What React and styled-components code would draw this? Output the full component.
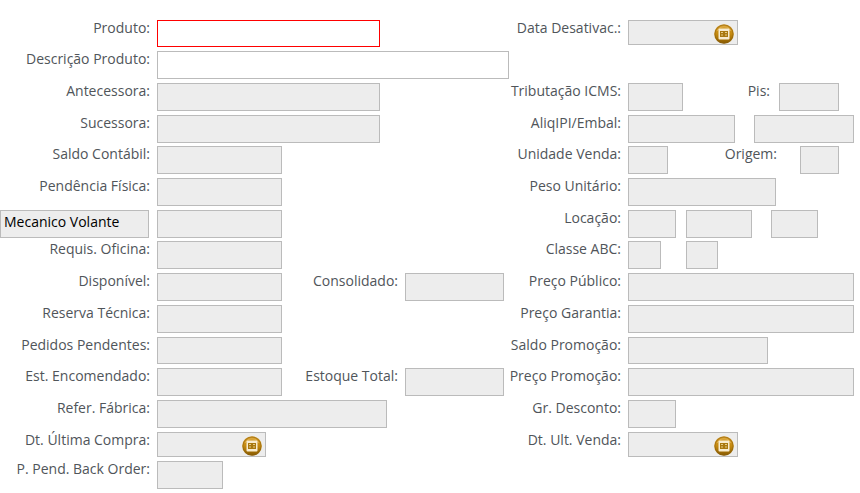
import React from "react";
import styled, { createGlobalStyle } from "styled-components";

const CalendarIcon = () => (
  <svg width="20" height="20" viewBox="0 0 20 20" aria-hidden="true">
    <defs>
      <linearGradient id="gold" x1="0" y1="0" x2="0" y2="1">
        <stop offset="0" stopColor="#d39a2a" />
        <stop offset="0.5" stopColor="#c58a10" />
        <stop offset="1" stopColor="#855800" />
      </linearGradient>
    </defs>
    <circle cx="10" cy="10" r="9.8" fill="url(#gold)" />
    <circle cx="10" cy="10" r="9" fill="none" stroke="#8a5f10" strokeOpacity="0.5" />
    <path d="M3 7a8 8 0 0 1 14 0" fill="none" stroke="#e8bd62" strokeOpacity="0.7" />
    <rect x="4.5" y="4.5" width="11" height="11" rx="1" fill="#f8ecd0" />
    <rect x="6" y="7" width="8" height="6" fill="#a9780f" />
    <path d="M7 8.5h2M11 8.5h2M7 11h2M11 11h2" stroke="#e6cc88" />
  </svg>
);

const Field = ({ label, name, width, white, required, space, short }) => (
  <Input
    id={name}
    name={name}
    aria-label={label}
    $width={width}
    $white={white}
    $required={required}
    $space={space}
    $short={short}
    readOnly={!white}
  />
);

const DateField = ({ name, width }) => (
  <DateBox $width={width}>
    <DateInput id={name} name={name} readOnly />
    <DateButton type="button" aria-label="Abrir calendário">
      <CalendarIcon />
    </DateButton>
  </DateBox>
);

const App = () => {
  return (
    <>
      <GlobalStyle />
      <Form onSubmit={(e) => e.preventDefault()}>
        <Row>
          <Label htmlFor="produto">Produto:</Label>
          <Fields>
            <Field name="produto" width={223} white required short />
          </Fields>
          <Label htmlFor="dataDesativac">Data Desativac.:</Label>
          <Fields>
            <DateField name="dataDesativac" width={110} />
          </Fields>
        </Row>
        <Row>
          <Label htmlFor="descricao">Descrição Produto:</Label>
          <Fields>
            <Field name="descricao" white />
          </Fields>
        </Row>
        <Row>
          <Label htmlFor="antecessora">Antecessora:</Label>
          <Fields>
            <Field name="antecessora" width={223} />
          </Fields>
          <Label htmlFor="icms">Tributação ICMS:</Label>
          <Fields>
            <Field name="icms" width={55} />
            <InnerLabel htmlFor="pis" $width={96} $pad={9}>Pis:</InnerLabel>
            <Field name="pis" width={60} />
          </Fields>
        </Row>
        <Row $tight>
          <Label htmlFor="sucessora">Sucessora:</Label>
          <Fields>
            <Field name="sucessora" width={223} />
          </Fields>
          <Label htmlFor="ipi">AliqIPI/Embal:</Label>
          <Fields>
            <Field name="ipi" width={107} />
            <Field name="embal" label="Embalagem" width={100} space={19} />
          </Fields>
        </Row>
        <Row>
          <Label htmlFor="saldoContabil">Saldo Contábil:</Label>
          <Fields>
            <Field name="saldoContabil" width={125} />
          </Fields>
          <Label htmlFor="unidade">Unidade Venda:</Label>
          <Fields>
            <Field name="unidade" width={40} />
            <InnerLabel htmlFor="origem" $width={132} $pad={23}>Origem:</InnerLabel>
            <Field name="origem" width={39} />
          </Fields>
        </Row>
        <Row>
          <Label htmlFor="pendencia">Pendência Física:</Label>
          <Fields>
            <Field name="pendencia" width={125} />
          </Fields>
          <Label htmlFor="peso">Peso Unitário:</Label>
          <Fields>
            <Field name="peso" width={148} />
          </Fields>
        </Row>
        <Row $tight>
          <NameInput aria-label="Descrição do saldo" defaultValue="Mecanico Volante" readOnly />
          <Fields>
            <Field name="mecanico" label="Mecanico Volante" width={125} />
          </Fields>
          <Label htmlFor="locacao1">Locação:</Label>
          <Fields>
            <Field name="locacao1" width={48} />
            <Field name="locacao2" label="Locação 2" width={66} space={10} />
            <Field name="locacao3" label="Locação 3" width={47} space={19} />
          </Fields>
        </Row>
        <Row>
          <Label htmlFor="requis">Requis. Oficina:</Label>
          <Fields>
            <Field name="requis" width={125} />
          </Fields>
          <Label htmlFor="classe1">Classe ABC:</Label>
          <Fields>
            <Field name="classe1" width={33} />
            <Field name="classe2" label="Classe ABC 2" width={32} space={25} />
          </Fields>
        </Row>
        <Row>
          <Label htmlFor="disponivel">Disponível:</Label>
          <Fields>
            <Field name="disponivel" width={125} />
            <InnerLabel htmlFor="consolidado" $width={123} $pad={7}>Consolidado:</InnerLabel>
            <Field name="consolidado" width={99} />
          </Fields>
          <Label htmlFor="precoPublico">Preço Público:</Label>
          <Fields>
            <Field name="precoPublico" />
          </Fields>
        </Row>
        <Row>
          <Label htmlFor="reserva">Reserva Técnica:</Label>
          <Fields>
            <Field name="reserva" width={125} />
          </Fields>
          <Label htmlFor="precoGarantia">Preço Garantia:</Label>
          <Fields>
            <Field name="precoGarantia" />
          </Fields>
        </Row>
        <Row>
          <Label htmlFor="pedidos">Pedidos Pendentes:</Label>
          <Fields>
            <Field name="pedidos" width={125} short />
          </Fields>
          <Label htmlFor="saldoPromocao">Saldo Promoção:</Label>
          <Fields>
            <Field name="saldoPromocao" width={140} short />
          </Fields>
        </Row>
        <Row>
          <Label htmlFor="encomendado">Est. Encomendado:</Label>
          <Fields>
            <Field name="encomendado" width={125} />
            <InnerLabel htmlFor="estoque" $width={123} $pad={7}>Estoque Total:</InnerLabel>
            <Field name="estoque" width={99} />
          </Fields>
          <Label htmlFor="precoPromocao">Preço Promoção:</Label>
          <Fields>
            <Field name="precoPromocao" />
          </Fields>
        </Row>
        <Row>
          <Label htmlFor="fabrica">Refer. Fábrica:</Label>
          <Fields>
            <Field name="fabrica" width={230} />
          </Fields>
          <Label htmlFor="desconto">Gr. Desconto:</Label>
          <Fields>
            <Field name="desconto" width={48} />
          </Fields>
        </Row>
        <Row>
          <Label htmlFor="ultimaCompra">Dt. Última Compra:</Label>
          <Fields>
            <DateField name="ultimaCompra" width={109} />
          </Fields>
          <Label htmlFor="ultimaVenda">Dt. Ult. Venda:</Label>
          <Fields>
            <DateField name="ultimaVenda" width={110} />
          </Fields>
        </Row>
        <Row>
          <Label htmlFor="backOrder">P. Pend. Back Order:</Label>
          <Fields>
            <Field name="backOrder" width={66} />
          </Fields>
        </Row>
      </Form>
    </>
  );
};

export default App;

const GlobalStyle = createGlobalStyle`
  * {
    box-sizing: border-box;
  }
  body {
    margin: 0;
    background-color: #fff;
    color: #50555a;
    font-family: "Open Sans", "Noto Sans", sans-serif;
    font-size: 14px;
    line-height: 15px;
  }
`;

const Form = styled.form`
  display: flex;
  flex-direction: column;
  padding: 20px 6px 0 0;
`;

const Row = styled.div`
  display: grid;
  grid-template-columns: 150px minmax(0, 352fr) 105px minmax(0, 226fr);
  column-gap: 7px;
  align-items: start;
  padding-bottom: ${(props) => (props.$tight ? 3 : 4)}px;
`;

const Label = styled.label`
  display: flex;
  justify-content: flex-end;
  white-space: nowrap;
`;

const InnerLabel = styled(Label)`
  flex: 0 1 ${(props) => props.$width}px;
  padding-right: ${(props) => props.$pad}px;
`;

const Fields = styled.div`
  display: flex;
  align-items: flex-start;
  min-width: 0;
`;

const Input = styled.input`
  flex: 0 1 ${(props) => (props.$width ? `${props.$width}px` : "100%")};
  min-width: 0;
  height: ${(props) => (props.$short ? 27 : 28)}px;
  margin: 0 0 0 ${(props) => props.$space || 0}px;
  padding: 0 3px 6px;
  border: 1px solid ${(props) => (props.$required ? "#f00" : "#bbb")};
  border-radius: 0;
  background-color: ${(props) => (props.$white ? "#fff" : "#ededed")};
  color: #000;
  font: inherit;
  outline: none;
`;

const NameInput = styled(Input)`
  width: 149px;
`;

const DateBox = styled.div`
  position: relative;
  display: flex;
  flex: 0 1 ${(props) => props.$width}px;
  min-width: 0;
`;

const DateInput = styled(Input)`
  height: 25px;
  padding-right: 26px;
`;

const DateButton = styled.button`
  position: absolute;
  top: 4px;
  right: 4px;
  display: flex;
  padding: 0;
  border: 0;
  background: none;
  cursor: pointer;
`;
